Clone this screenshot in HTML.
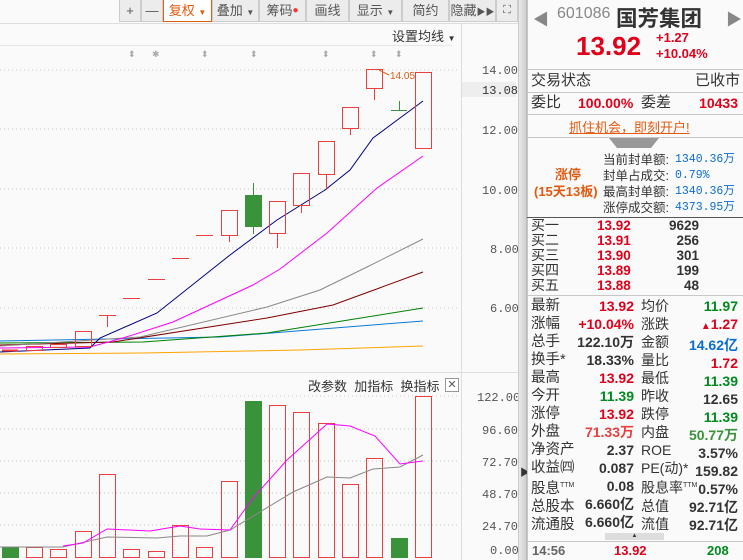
<!DOCTYPE html>
<html><head><meta charset="utf-8">
<style>
*{margin:0;padding:0;box-sizing:border-box}
body{width:743px;height:560px;overflow:hidden;background:#fafafa;font-family:"Liberation Sans","Noto Sans CJK SC",sans-serif;position:relative}
.a{position:absolute;white-space:nowrap}
.tb{position:absolute;top:0;height:22px;border:1px solid #ccc;border-top:none;background:#ececec;color:#555;font-size:13px;line-height:21px;text-align:center}
.hl{position:absolute;left:527px;width:216px;height:1px;background:#c8c8c8}
.lb{position:absolute;font-size:14px;color:#333;line-height:18px}
.v{position:absolute;font-size:14px;font-weight:bold;line-height:18px;text-align:right}
.red{color:#e0001a}.grn{color:#008a1e}.blk{color:#333}.blu{color:#0a6cd0}
</style></head><body>
<div class="tb" style="left:119px;width:22px">+</div>
<div class="tb" style="left:141px;width:22px">—</div>
<div class="tb" style="left:163px;width:49px;background:#fff;border:1px solid #e06010;border-top:none;color:#e05a10">复权 <span style="font-size:8px">▼</span></div>
<div class="tb" style="left:212px;width:47px">叠加 <span style="font-size:8px">▼</span></div>
<div class="tb" style="left:259px;width:47px">筹码<span style="color:#f33;font-size:10px;vertical-align:top">●</span></div>
<div class="tb" style="left:306px;width:43px">画线</div>
<div class="tb" style="left:349px;width:53px">显示 <span style="font-size:8px">▼</span></div>
<div class="tb" style="left:402px;width:47px">简约</div>
<div class="tb" style="left:449px;width:47px">隐藏<span style="font-size:9px">▶▶</span></div>
<div class="tb" style="left:496px;width:22px;font-size:11px">⛶</div>
<div class="a" style="left:0;top:23px;width:518px;height:1px;background:#ddd"></div>
<div class="a" style="left:392px;top:26px;font-size:13px;color:#333">设置均线 <span style="font-size:8px">▼</span></div>
<div class="a" style="left:0;top:45px;width:452px;height:1px;background:#e6e6e6"></div>
<div class="a" style="left:461px;top:23px;width:1px;height:537px;background:#ddd"></div>
<div class="a" style="left:0;top:372px;width:518px;height:1px;background:#ddd"></div>
<div class="a" style="left:518px;top:0;width:9px;height:560px;background:linear-gradient(90deg,#e8e8e8,#d0d0d0);border-left:1px solid #ccc;border-right:1px solid #bbb"></div>
<div class="a" style="left:520px;top:464px;font-size:10px;color:#333">▶</div>
<svg class="a" style="left:0;top:0" width="518" height="560">
<g stroke="#c8c8c8" stroke-dasharray="1,3">
<line x1="0" y1="70" x2="460" y2="70"/><line x1="0" y1="129" x2="460" y2="129"/><line x1="0" y1="189" x2="460" y2="189"/><line x1="0" y1="248" x2="460" y2="248"/><line x1="0" y1="308" x2="460" y2="308"/>
<line x1="0" y1="396" x2="460" y2="396"/><line x1="0" y1="429" x2="460" y2="429"/><line x1="0" y1="461" x2="460" y2="461"/><line x1="0" y1="493" x2="460" y2="493"/><line x1="0" y1="525" x2="460" y2="525"/>
</g>
<g fill="#aaa" font-size="9"><text x="128" y="57">⬍</text><text x="152" y="57">✱</text><text x="201" y="57">⬍</text><text x="250" y="57">⬍</text><text x="322" y="57">⬍</text><text x="370" y="57">⬍</text><text x="395" y="57">⬍</text></g>
<g fill="none" stroke-width="1">
<polyline stroke="#ffa500" points="0,354 143,353 300,350 423,346"/>
<polyline stroke="#0a7ad6" points="0,341 220,337 423,321"/>
<polyline stroke="#008000" points="0,343 143,342 267,333 423,308"/>
<polyline stroke="#800000" points="0,345 113,342 267,318 333,305 423,272"/>
<polyline stroke="#888" points="0,346 140,337 267,307 320,290 367,267 423,239"/>
<polyline stroke="#f0f" points="0,348 90,347 123,338 173,322 253,285 280,269 327,233 377,188 423,156"/>
<polyline stroke="#000080" points="0,352 90,348 100,338 157,313 230,255 277,220 325,190 350,170 373,138 400,118 423,101"/>
</g>
<g stroke="#e84040" fill="none">
<line x1="2" y1="350.5" x2="18" y2="350.5" stroke-width="2"/>
<rect x="26.5" y="346.5" width="16" height="4"/>
<rect x="50.5" y="344.5" width="16" height="3"/>
<rect x="75.5" y="331.5" width="16" height="15"/>
<line x1="99" y1="315.5" x2="116" y2="315.5"/><line x1="107.5" y1="315" x2="107.5" y2="327"/>
<line x1="123" y1="298.5" x2="140" y2="298.5"/>
<line x1="148" y1="279.5" x2="165" y2="279.5"/>
<line x1="172" y1="258.5" x2="189" y2="258.5"/>
<line x1="196" y1="235.5" x2="213" y2="235.5"/>
<rect x="221.5" y="210.5" width="16" height="25"/><line x1="229.5" y1="236" x2="229.5" y2="242"/>
<rect x="269.5" y="201.5" width="16" height="32"/><line x1="277.5" y1="234" x2="277.5" y2="248"/>
<rect x="293.5" y="173.5" width="16" height="32"/><line x1="301.5" y1="206" x2="301.5" y2="213"/>
<rect x="318.5" y="141.5" width="16" height="33"/><line x1="326.5" y1="175" x2="326.5" y2="190"/>
<rect x="342.5" y="107.5" width="16" height="21"/><line x1="350.5" y1="129" x2="350.5" y2="135"/>
<rect x="366.5" y="69.5" width="16" height="19"/><line x1="374.5" y1="89" x2="374.5" y2="100"/>
<rect x="415.5" y="72.5" width="16" height="76"/>
</g>
<rect x="245" y="195" width="17" height="32" fill="#3a923a"/><line x1="253.5" y1="183" x2="253.5" y2="234" stroke="#3a923a"/>
<line x1="391" y1="110.5" x2="407" y2="110.5" stroke="#3a923a"/><line x1="399.5" y1="101" x2="399.5" y2="110" stroke="#3a923a"/>
<text x="390" y="79" fill="#e05a10" font-size="10">14.05</text>
<line x1="379" y1="70" x2="389" y2="75" stroke="#e05a10"/>
<g stroke="#e84040" fill="none">
<rect x="26.5" y="547.5" width="16" height="10"/><rect x="50.5" y="549.5" width="16" height="8"/><rect x="75.5" y="531.5" width="16" height="26"/><rect x="99.5" y="474.5" width="16" height="83"/><rect x="123.5" y="549.5" width="16" height="8"/><rect x="148.5" y="551.5" width="16" height="6"/><rect x="172.5" y="525.5" width="16" height="32"/><rect x="196.5" y="547.5" width="16" height="10"/><rect x="221.5" y="481.5" width="16" height="76"/><rect x="269.5" y="405.5" width="16" height="152"/><rect x="293.5" y="412.5" width="16" height="145"/><rect x="318.5" y="423.5" width="16" height="134"/><rect x="342.5" y="484.5" width="16" height="73"/><rect x="366.5" y="458.5" width="16" height="99"/><rect x="415.5" y="396.5" width="16" height="161"/>
</g>
<rect x="2" y="547" width="17" height="11" fill="#3a923a"/><rect x="245" y="401" width="17" height="157" fill="#3a923a"/><rect x="391" y="538" width="17" height="20" fill="#3a923a"/>
<polyline fill="none" stroke="#888" points="0,547 63,547 107,537 157,538 180,536 207,536 230,530 293,492 327,477 350,478 373,469 400,467 423,455"/>
<polyline fill="none" stroke="#f0f" points="63,546 83,543 107,529 150,531 180,526 200,529 230,530 253,498 287,460 327,424 350,426 375,436 400,464 423,461"/>
<g fill="#555" font-size="12" font-family="Liberation Mono,monospace">
<text x="482" y="74">14.00</text><text x="482" y="194">10.00</text><text x="482" y="134">12.00</text><text x="490" y="253">8.00</text><text x="490" y="312">6.00</text>
<text x="477" y="401">122.00</text><text x="482" y="434">96.60</text><text x="482" y="466">72.70</text><text x="482" y="498">48.70</text><text x="482" y="530">24.70</text><text x="490" y="554">0.00</text>
</g>
<rect x="462" y="82" width="54" height="15" fill="#eee"/>
<text x="482" y="94" fill="#333" font-size="12" font-family="Liberation Mono,monospace">13.08</text>
</svg>
<div class="a" style="left:308px;top:376px;font-size:13px;color:#333">改参数&nbsp;&nbsp;加指标&nbsp;&nbsp;换指标</div>
<div class="a" style="left:445px;top:378px;width:14px;height:14px;border:1px solid #999;font-size:11px;line-height:12px;text-align:center;color:#555;background:#fff">✕</div>
<div class="a" style="left:527px;top:0;width:216px;height:560px;background:#fafafa;border-left:1px solid #c8c8c8"></div>
<div class="a" style="left:533px;top:6px;font-size:16px;color:#888">◀</div>
<div class="a" style="left:726px;top:6px;font-size:16px;color:#888">▶</div>
<div class="a" style="left:557px;top:5px;font-size:16px;color:#888">601086</div>
<div class="a" style="left:616px;top:2px;font-size:21.5px;font-weight:bold;color:#333">国芳集团</div>
<div class="a red" style="left:576px;top:31px;font-size:26px;font-weight:bold">13.92</div>
<div class="a red" style="left:656px;top:30px;font-size:13px;font-weight:bold">+1.27</div>
<div class="a red" style="left:656px;top:46px;font-size:13px;font-weight:bold">+10.04%</div>
<div class="hl" style="top:69px"></div>
<div class="lb" style="left:531px;top:72px;font-size:15px">交易状态</div>
<div class="lb" style="left:695px;top:72px;font-size:15px">已收市</div>
<div class="hl" style="top:92px"></div>
<div class="lb" style="left:531px;top:94px;font-size:15px">委比</div>
<div class="v red" style="left:578px;top:94px">100.00%</div>
<div class="lb" style="left:641px;top:94px;font-size:15px">委差</div>
<div class="v red" style="left:690px;top:94px;width:48px">10433</div>
<div class="hl" style="top:114px"></div>
<div class="a" style="left:569px;top:117px;font-size:13px;color:#e05a10;text-decoration:underline">抓住机会，即刻开户!</div>
<div class="hl" style="top:137px"></div>
<div class="a" style="left:609px;top:138px;width:50px;height:0;border-top:10px solid #999;border-left:8px solid transparent;border-right:8px solid transparent"></div>
<div class="a" style="left:555px;top:164px;font-size:13px;font-weight:bold;color:#e05a10">涨停</div>
<div class="a" style="left:534px;top:181px;font-size:13px;font-weight:bold;color:#e05a10">(15天13板)</div>
<div class="a" style="left:603px;top:152px;font-size:12.5px;color:#333;line-height:16px">当前封单额:<br>封单占成交:<br>最高封单额:<br>涨停成交额:</div>
<div class="a blu" style="left:675px;top:152px;font-size:11.5px;line-height:16px;font-family:'Liberation Mono','Noto Sans CJK SC',monospace">1340.36万<br>0.79%<br>1340.36万<br>4373.95万</div>
<div class="a" style="left:527px;top:217px;width:216px;height:1px;background:#555"></div>
<div class="a" style="left:531px;top:218px;font-size:14px;color:#333;line-height:15px">买一<br>买二<br>买三<br>买四<br>买五</div>
<div class="a red" style="left:597px;top:218px;font-size:13.5px;font-weight:bold;line-height:15px">13.92<br>13.91<br>13.90<br>13.89<br>13.88</div>
<div class="a blk" style="left:650px;top:218px;width:49px;text-align:right;font-size:13.5px;font-weight:bold;line-height:15px">9629<br>256<br>301<br>199<br>48</div>
<div class="hl" style="top:295px"></div>
<div class="a" style="left:531px;top:297px;font-size:14.5px;color:#333;line-height:18px">最新<br>涨幅<br>总手<br>换手*<br>最高<br>今开<br>涨停<br>外盘<br>净资产<br>收益㈣<br>股息<sup style="font-size:7px">TTM</sup><br>总股本<br>流通股</div>
<div class="a" style="left:641px;top:297px;font-size:14px;color:#333;line-height:18px">均价<br>涨跌<br>金额<br>量比<br>最低<br>昨收<br>跌停<br>内盘<br>ROE<br>PE(动)*<br>股息率<sup style="font-size:7px">TTM</sup><br>总值<br>流值</div>
<div class="a" style="left:560px;top:297px;width:74px;text-align:right;font-size:14px;font-weight:bold;line-height:18px"><span class="red">13.92</span><br><span class="red">+10.04%</span><br><span class="blk">122.10万</span><br><span class="blk">18.33%</span><br><span class="red">13.92</span><br><span class="grn">11.39</span><br><span class="red">13.92</span><br><span style="color:#e84040">71.33万</span><br><span class="blk">2.37</span><br><span class="blk">0.087</span><br><span class="blk">0.08</span><br><span class="blk">6.660亿</span><br><span class="blk">6.660亿</span></div>
<div class="a" style="left:670px;top:297px;width:68px;text-align:right;font-size:14px;font-weight:bold;line-height:18px"><span class="grn">11.97</span><br><span class="red"><span style="font-size:10px">▲</span>1.27</span><br><span class="blu">14.62亿</span><br><span class="red">1.72</span><br><span class="grn">11.39</span><br><span class="blk">12.65</span><br><span class="grn">11.39</span><br><span style="color:#3a923a">50.77万</span><br><span class="blk">3.57%</span><br><span class="blk">159.82</span><br><span class="blk">0.57%</span><br><span class="blk">92.71亿</span><br><span class="blk">92.71亿</span></div>
<div class="a" style="left:605px;top:533px;width:59px;height:7px;background:#ddd;font-size:6px;text-align:center;color:#333;line-height:7px">▲</div>
<div class="hl" style="top:541px"></div>
<div class="a" style="left:532px;top:543px;font-size:13px;font-weight:bold;color:#666">14:56</div>
<div class="a red" style="left:614px;top:543px;font-size:13px;font-weight:bold">13.92</div>
<div class="a grn" style="left:707px;top:543px;font-size:13px;font-weight:bold">208</div>
</body></html>
